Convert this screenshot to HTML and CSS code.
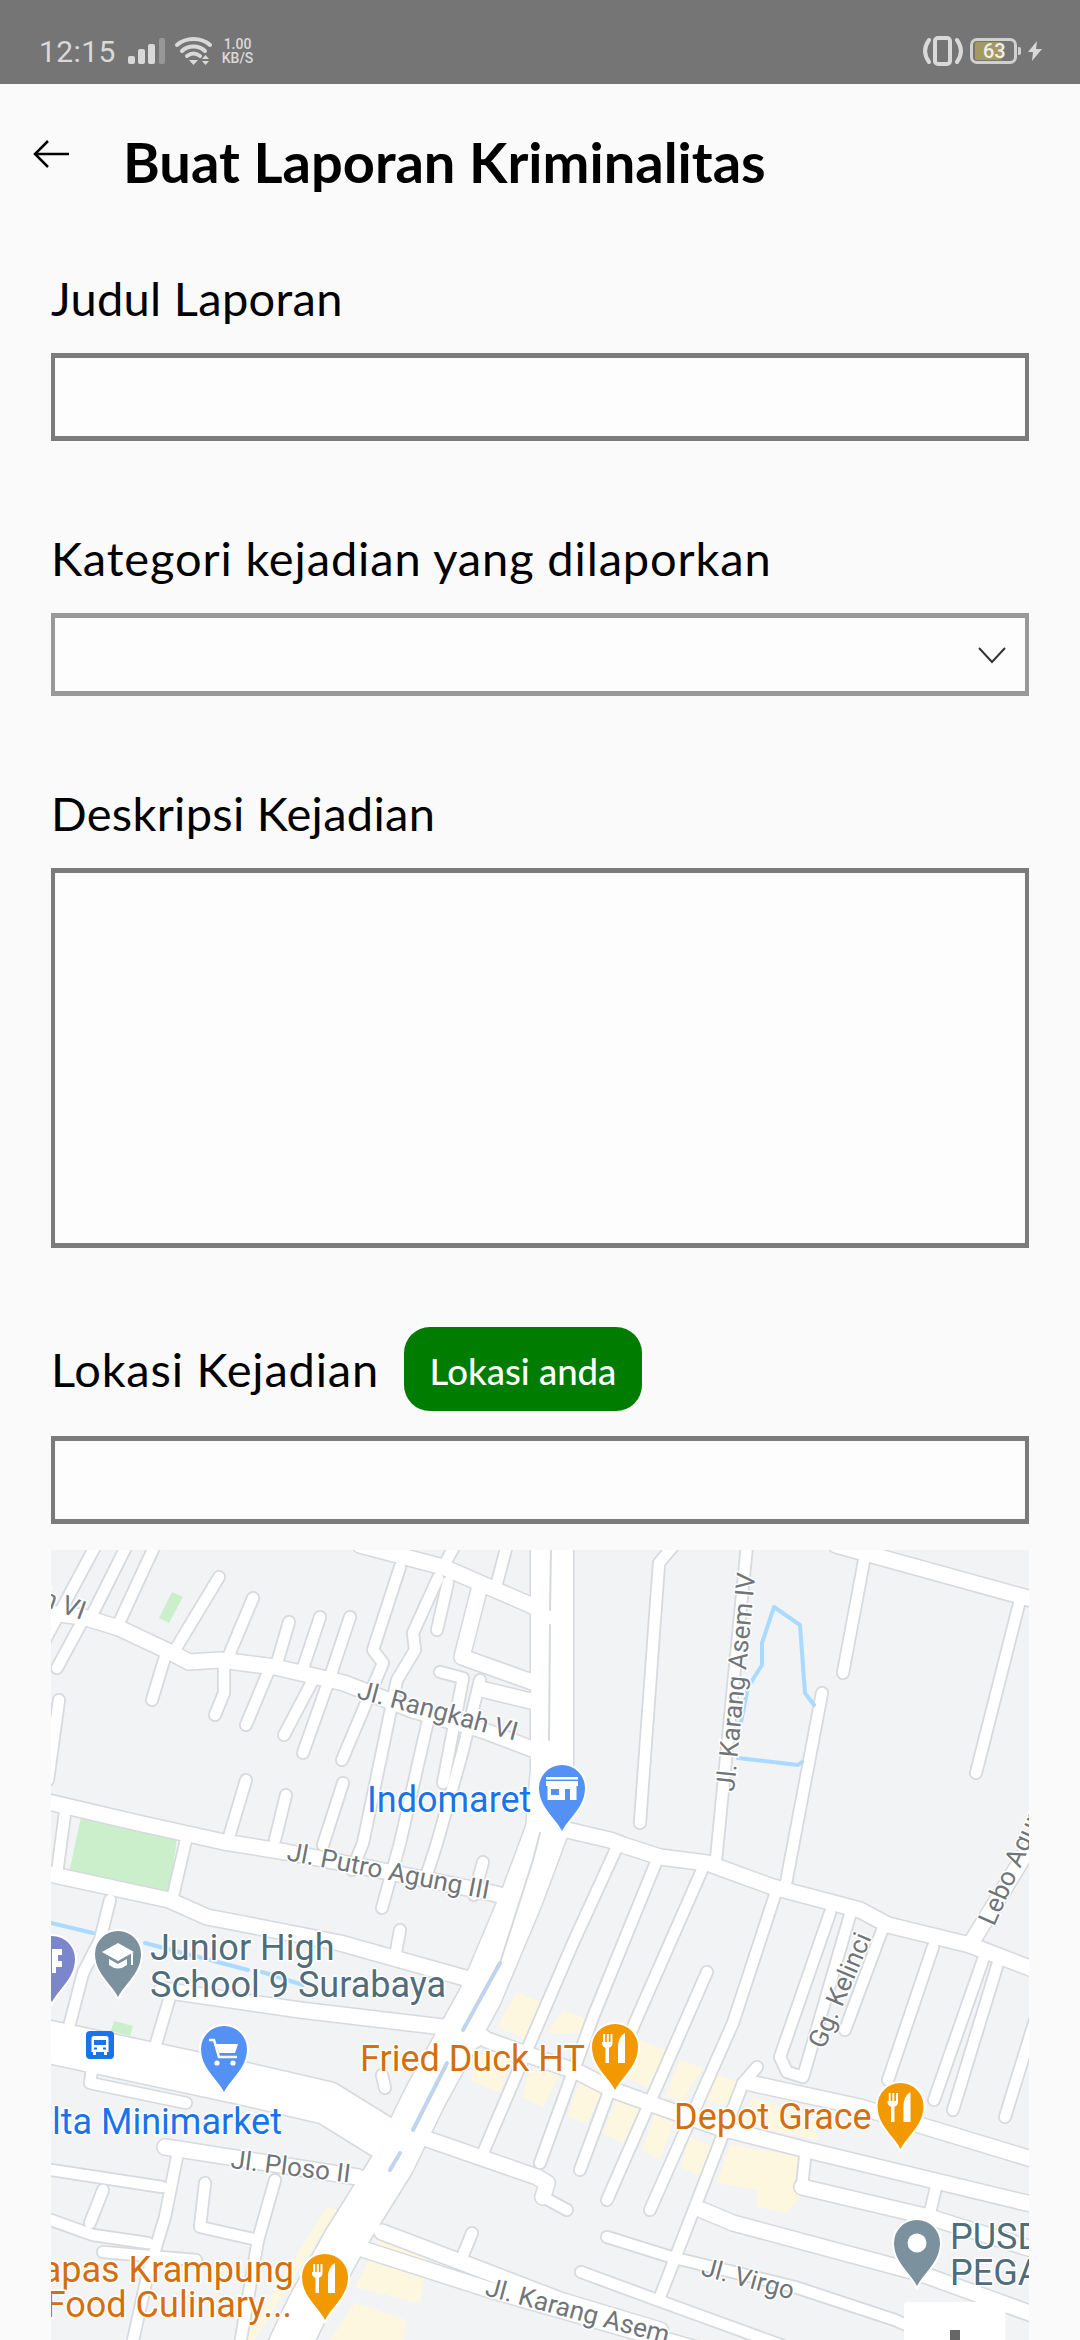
FILE: index.html
```html
<!DOCTYPE html>
<html lang="id">
    <head>
        <meta charset="UTF-8" />
        <meta name="viewport" content="width=device-width, initial-scale=1.0" />
        <title>Buat Laporan Kriminalitas</title>
        <link rel="stylesheet" href="styles.css">
    </head>
    <body>
        <div class="status-bar">
            <span class="clock">12:15</span>
            <svg class="ic-signal" width="38" height="26" viewBox="0 0 38 26">
                <rect class="ic-fill" x="0" y="18" width="7" height="8" rx="2" />
                <rect class="ic-fill" x="10" y="11" width="7" height="15" rx="2" />
                <rect class="ic-fill" x="20" y="6" width="7" height="20" rx="2" />
                <rect class="ic-dim" x="31" y="0" width="6" height="26" rx="2" />
            </svg>
            <svg class="ic-wifi" width="38" height="30" viewBox="0 0 38 30">
                <path class="ic-line" d="M2 9 C11 1 26 1 35 9" />
                <path class="ic-line" d="M7 15 C13 9 24 9 30 15" />
                <path class="ic-line" d="M12 20 C16 17 21 17 25 20" />
                <path class="ic-fill" d="M14 24 h9 l-4.500 5z" />
                <path class="ic-fill" d="M27 23 l3.500 -4 3.500 4z M27 25 h7 l-3.500 4z" />
            </svg>
            <div class="net-speed">
                <span>1.00</span>
                <span>KB/S</span>
            </div>
            <div class="status-right">
                <svg width="42" height="30" viewBox="0 0 42 30">
                    <rect class="ic-line" x="13" y="2" width="15" height="26" rx="3" />
                    <path class="ic-line" d="M7 4 C2 11 2 19 7 26" />
                    <path class="ic-line" d="M35 4 C40 11 40 19 35 26" />
                </svg>
                <div class="battery">
                    <div class="battery-level"></div>
                    <span class="battery-text">63</span>
                </div>
                <svg class="ic-bolt" width="14" height="20" viewBox="0 0 14 20">
                    <path class="ic-fill" d="M9 0 L0 11 H5 L4 20 L14 8 H8z" />
                </svg>
            </div>
        </div>

        <header class="app-bar">
            <svg class="back" width="36" height="28" viewBox="0 0 36 28">
                <path d="M15 1 L2 14 L15 27 M2 14 H36" />
            </svg>
            <h1>Buat Laporan Kriminalitas</h1>
        </header>

        <form class="report-form">
            <label class="label label-first">Judul Laporan</label>
            <input class="field field-line" type="text" />

            <label class="label label-wide">Kategori kejadian yang dilaporkan</label>
            <div class="select-wrap">
                <select class="field field-select"></select>
                <svg class="chevron" width="30" height="18" viewBox="0 0 30 18">
                    <path d="M2 2 L15 16 L28 2" />
                </svg>
            </div>

            <label class="label">Deskripsi Kejadian</label>
            <textarea class="field field-area"></textarea>

            <div class="location-row">
                <label class="label-inline">Lokasi Kejadian</label>
                <button class="btn-location" type="button">Lokasi anda</button>
            </div>
            <input class="field field-line" type="text" />

            <div class="map">
                <svg width="978" height="790" viewBox="51 1550 978 790">
                    <defs>
                        <g id="lanes">
                            <path d="M219 1577 L175 1650" />
                            <path d="M253 1598 L229 1655" />
                            <path d="M269 1670 L246 1725" />
                            <path d="M289 1622 L277 1663" />
                            <path d="M320 1617 L303 1668" />
                            <path d="M313 1680 L284 1735" />
                            <path d="M350 1617 L330 1677 L303 1753" />
                            <path d="M400 1567 L373 1650 L383 1663 L342 1760" />
                            <path d="M165 1657 L152 1700" />
                            <path d="M224 1667 L224 1693 L215 1715" />
                            <path d="M155 1545 L119 1623" />
                            <path d="M127 1545 L93 1613" />
                            <path d="M96 1545 L45 1640" />
                            <path d="M83 1620 L57 1668" />
                            <path d="M59 1700 L48 1780" />
                            <path d="M438 1578 L413 1633 L415 1650 L397 1680 L363 1843 L352 1870" />
                            <path d="M430 1712 L400 1843 L382 1908" />
                            <path d="M448 1582 L437 1630" />
                            <path d="M440 1672 L463 1678 L443 1783" />
                            <path d="M480 1680 L463 1750 L437 1843 L425 1880" />
                            <path d="M483 1862 L474 1895" />
                            <path d="M400 1930 L395 1957" />
                            <path d="M507 1545 L497 1583" />
                            <path d="M455 1545 L443 1567" />
                            <path d="M246 1780 L229 1837" />
                            <path d="M286 1795 L275 1840" />
                            <path d="M343 1783 L323 1845" />
                            <path d="M65 1813 L57 1873" />
                            <path d="M186 1840 L172 1900" />
                            <path d="M110 1900 L100 1940 L83 1973 L69 2027" />
                            <path d="M169 2000 L155 2047" />
                            <path d="M93 2063 L90 2083 L186 2103" />
                            <path d="M179 2147 L165 2217 L148 2273 L132 2345" />
                            <path d="M51 2170 L162 2187" />
                            <path d="M103 2190 L90 2223" />
                            <path d="M51 2220 L93 2235 L148 2243" />
                            <path d="M205 2183 L200 2227 L258 2240" />
                            <path d="M275 2180 L258 2240 L240 2345" />
                            <path d="M103 2252 L196 2260" />
                            <path d="M385 2088 L382 2075" />
                            <path d="M543 2197 L567 2210" />
                            <path d="M472 2233 L461 2260" />
                            <path d="M659 1563 L674 1545 M659 1563 L640 1823" />
                            <path d="M747 1545 L716 1860" />
                            <path d="M822 1693 L786 1883" />
                            <path d="M867 1545 L843 1673" />
                            <path d="M1020 1600 L976 1773" />
                            <path d="M617 1847 L573 1943 L530 2043 L483 2153" />
                            <path d="M657 1860 L593 2017 L540 2163" />
                            <path d="M702 1870 L633 2027 L580 2170" />
                            <path d="M707 1972 L607 2200" />
                            <path d="M775 1895 L733 2023 L650 2210" />
                            <path d="M757 2067 L743 2083 L660 2297" />
                            <path d="M830 1913 L780 2057 L787 2072 L803 2077 L850 1915" />
                            <path d="M884 1925 L845 2030" />
                            <path d="M933 1947 L888 2080" />
                            <path d="M984 1957 L934 2100" />
                            <path d="M998 1963 L953 2110" />
                            <path d="M1035 2020 L1005 2117" />
                            <path d="M936 2187 L929 2217" />
                            <path d="M805 2157 L802 2187" />
                            <path d="M607 2237 L671 2257 L795 2287 L895 2320 L950 2345" />
                            <path d="M581 2272 L657 2300 L781 2345" />
                        </g>
                        <g id="streets">
                            <path d="M40 1612 L83 1617 L119 1628 L172 1653 L189 1662 L220 1660 L275 1667 L344 1683 L413 1710 L482 1730 L535 1750" />
                            <path d="M360 1545 L443 1567 L535 1607" />
                            <path d="M479 1590 L462 1657 L535 1683" />
                            <path d="M485 1690 L535 1702" />
                            <path d="M40 1800 L138 1823 L224 1842 L286 1852 L379 1870 L492 1893 L530 1903" />
                            <path d="M567 1830 L610 1840 L623 1845 L660 1857 L707 1863 L773 1887 L860 1910 L888 1925 L970 1945 L1035 1970" />
                            <path d="M836 1545 L1035 1600" />
                            <path d="M970 1945 L1035 1838" />
                            <path d="M40 1872 L169 1900 L207 1917 L300 1935 L340 1943 L390 1957 L490 1985" />
                            <path d="M162 1990 L300 2010 L443 2027 L475 2040" />
                            <path d="M473 2030 L487 2040 L580 2073 L613 2090 L660 2107 L717 2127 L807 2150 L1035 2205" />
                            <path d="M750 2083 L860 2107 L1035 2160" />
                            <path d="M802 2187 L929 2217 L1035 2250" />
                            <path d="M702 2210 L733 2223 L919 2273 L1035 2315" />
                            <path d="M430 2140 L537 2177 L547 2183 L543 2197" />
                            <path d="M165 2147 L358 2177" />
                            <path d="M382 2232 L482 2270 L560 2300 L660 2330" />
                            <path d="M350 2245 L490 2290 L700 2350" />
                        </g>
                        <g id="mains">
                            <path class="wide" d="M40 2040 L241 2083 L327 2103 L382 2137" />
                            <path d="M552 1545 L552 1770 L547 1830 L522 1897 L480 1997 L425 2097 L393 2163 L345 2240 L308 2307 L290 2345" />
                        </g>
                        <path id="pin" d="M0 70 C-3 58 -24 46 -24 24 A24 24 0 1 1 24 24 C24 46 3 58 0 70Z" />
                        <g id="food">
                            <path d="M-13 11 v9 a5 5 0 0 0 3.500 4.700 V40 h3.500 V24.700 a5 5 0 0 0 3.500 -4.700 v-9 h-2 v8 h-1.700 v-8 h-2 v8 h-1.600 v-8 h-2 v8 h-1.200 v-8z" />
                            <path d="M3 40 V24 C3 17 6 12 10 10 V40z" />
                        </g>
                    </defs>

                    <polygon class="park" points="81,1817 177,1838 169,1895 69,1873" />
                    <polygon class="park" points="172,1592 183,1597 169,1623 159,1618" />
                    <polygon class="park" points="114,2021 133,2026 130,2036 111,2031" />
                    <g class="build">
                        <polygon points="517,1992 543,2003 527,2040 497,2027" />
                        <polygon points="563,2010 588,2020 580,2033 547,2033" />
                        <polygon points="640,2040 665,2050 652,2090 627,2078" />
                        <polygon points="680,2060 703,2068 683,2100 665,2097" />
                        <polygon points="717,2075 740,2083 730,2107 705,2100" />
                        <polygon points="487,2043 510,2060 500,2093 470,2080" />
                        <polygon points="530,2070 560,2073 543,2107 522,2097" />
                        <polygon points="580,2080 603,2090 587,2123 567,2117" />
                        <polygon points="617,2097 642,2107 623,2143 603,2133" />
                        <polygon points="655,2113 673,2123 660,2160 642,2150" />
                        <polygon points="690,2137 713,2147 700,2175 680,2167" />
                        <polygon points="753,2097 817,2120 817,2140 740,2123" />
                        <polygon points="730,2145 803,2157 800,2197 787,2213 757,2207 757,2190 717,2183" />
                        <polygon points="327,2207 337,2210 251,2345 240,2345" />
                        <polygon points="379,2240 427,2257 420,2303 355,2287" />
                        <polygon points="355,2303 406,2320 403,2345 327,2345" />
                    </g>

                    <use href="#lanes" class="case case-lane" />
                    <use href="#streets" class="case case-street" />
                    <use href="#mains" class="case case-main" />
                    <use href="#lanes" class="road road-lane" />
                    <use href="#streets" class="road road-street" />
                    <use href="#mains" class="road road-main" />

                    <g class="median">
                        <path d="M551 1545 L550 1610 M550 1625 L549 1740" />
                        <path d="M540 1833 L533 1860 L500 1963" />
                    </g>
                    <g class="water">
                        <path d="M741 1722 L748 1687 L762 1665 L762 1643 L774 1607 L800 1625 L805 1693 L814 1705" />
                        <path d="M738 1758 L798 1765 L802 1762" />
                        <path d="M51 1923 L93 1933" />
                        <path d="M145 1943 L248 1970 M262 1972 L303 1985" />
                    </g>
                    <g class="water-thin">
                        <path d="M500 1963 L463 2030" />
                        <path d="M447 2063 L413 2130" />
                        <path d="M400 2153 L390 2170" />
                    </g>

                    <g class="street-text">
                        <text transform="translate(82 1620) rotate(20)" text-anchor="end">Jl. Rangkah VI</text>
                        <text transform="translate(356 1698) rotate(15)">Jl. Rangkah VI</text>
                        <text transform="translate(286 1860) rotate(11)">Jl. Putro Agung III</text>
                        <text transform="translate(734 1792) rotate(-84.400)">Jl. Karang Asem IV</text>
                        <text transform="translate(824 2050) rotate(-67)">Gg. Kelinci</text>
                        <text transform="translate(994 1927) rotate(-66)">Lebo Agung</text>
                        <text transform="translate(230 2168) rotate(7)">Jl. Ploso II</text>
                        <text transform="translate(700 2275) rotate(15)">Jl. Virgo</text>
                        <text transform="translate(484 2295) rotate(15)">Jl. Karang Asem</text>
                    </g>

                    <g class="poi-text poi-blue">
                        <text x="367" y="1812">Indomaret</text>
                        <text x="282" y="2134" text-anchor="end">Delta Minimarket</text>
                    </g>
                    <g class="poi-text poi-slate">
                        <text><tspan x="150" y="1960">Junior High</tspan><tspan x="150" y="1997">School 9 Surabaya</tspan></text>
                        <text><tspan x="950" y="2249">PUSDIK</tspan><tspan x="950" y="2285">PEGAWAI</tspan></text>
                    </g>
                    <g class="poi-text poi-orange">
                        <text x="360" y="2071">Fried Duck HT</text>
                        <text x="674" y="2129">Depot Grace</text>
                        <text text-anchor="end"><tspan x="294" y="2282">Lapas Krampung</tspan><tspan x="292" y="2317">Food Culinary...</tspan></text>
                    </g>

                    <g transform="translate(562 1764)">
                        <use href="#pin" class="pin pin-blue" />
                        <rect class="ic-white" x="-16" y="13" width="32" height="2.500" />
                        <path class="ic-white" fill-rule="evenodd" d="M-16 17 h32 v5 h-1.500 v14 h-29 v-14 h-1.500z M-11 25 v6 h8 v-6z M3 25 v11 h5 v-11z" />
                    </g>
                    <g transform="translate(224 2025)">
                        <use href="#pin" class="pin pin-blue" />
                        <path class="ic-stroke" d="M-15 15 h5 l5 17 h18" />
                        <path class="ic-white" d="M-8 19 h22 l-3 9 h-16z" />
                        <circle class="ic-white" cx="-7" cy="38" r="2.600" />
                        <circle class="ic-white" cx="9" cy="38" r="2.600" />
                    </g>
                    <g transform="translate(118 1930)">
                        <use href="#pin" class="pin pin-slate" />
                        <path class="ic-white" d="M-16 22 L0 13 L16 22 L0 31z" />
                        <path class="ic-white" d="M-9 29 v6 Q0 42 9 35 v-6 L0 34z" />
                        <rect class="ic-white" x="13" y="23" width="2" height="12" />
                    </g>
                    <g transform="translate(52 1935)">
                        <use href="#pin" class="pin pin-purple" />
                        <path class="ic-white" d="M0 14 h10 v6 h-4 v6 h4 v6 h-6 v6 h-4z" />
                    </g>
                    <g transform="translate(615 2023)">
                        <use href="#pin" class="pin pin-orange" />
                        <use href="#food" class="ic-white" />
                    </g>
                    <g transform="translate(900.500 2082)">
                        <use href="#pin" class="pin pin-orange" />
                        <use href="#food" class="ic-white" />
                    </g>
                    <g transform="translate(325 2253)">
                        <use href="#pin" class="pin pin-orange" />
                        <use href="#food" class="ic-white" />
                    </g>
                    <g transform="translate(917 2219)">
                        <use href="#pin" class="pin pin-slate" />
                        <circle class="ic-white" cx="0" cy="24" r="9.500" />
                    </g>

                    <rect class="bus-bg" x="86" y="2031" width="28" height="28" rx="4" />
                    <path class="ic-white" fill-rule="evenodd" d="M94 2036 h12 a2.500 2.500 0 0 1 2.500 2.500 V2052 h-1.500 v3 h-3 v-3 h-8 v3 h-3 v-3 h-1.500 V2038.500 a2.500 2.500 0 0 1 2.500 -2.500z M94 2040 v5 h12 v-5z M94 2047.500 v2 h3 v-2z M103 2047.500 v2 h3 v-2z" />

                    <rect class="zoom-box" x="904" y="2302" width="101.500" height="60" rx="3" />
                    <rect class="zoom-plus" x="950" y="2330" width="10" height="14" />
                </svg>
            </div>
        </form>
    </body>
</html>
```

FILE: styles.css
```css
* {
    box-sizing: border-box;
}
html, body {
    margin: 0;
    padding: 0;
}
body {
    width: 1080px;
    height: 2340px;
    overflow: hidden;
    background: #fafafa;
    font-family: "Lato", "Noto Sans", sans-serif;
    color: #000;
}

/* status bar */
.status-bar {
    height: 84px;
    background: #757575;
    padding: 18px 38px 0 39px;
    display: flex;
    align-items: center;
    font-family: "Roboto", sans-serif;
    color: #d9d9d9;
}
.clock {
    font-size: 30px;
    letter-spacing: 0.4px;
}
.ic-signal {
    margin-left: 12px;
}
.ic-wifi {
    margin-left: 9px;
}
.ic-fill {
    fill: #d9d9d9;
}
.ic-dim {
    fill: #979797;
}
.ic-line {
    fill: none;
    stroke: #d9d9d9;
    stroke-width: 4;
    stroke-linecap: round;
}
.net-speed {
    margin-left: 9px;
    display: flex;
    flex-direction: column;
    font-size: 14px;
    font-weight: 500;
    line-height: 14px;
    align-items: center;
}
.status-right {
    margin-left: auto;
    display: flex;
    align-items: center;
    gap: 6px;
}
.battery {
    position: relative;
    width: 47px;
    height: 26px;
    border: 3px solid #d0d0d0;
    border-radius: 7px;
    margin-right: 5px;
}
.battery::after {
    content: "";
    position: absolute;
    right: -7px;
    top: 6px;
    width: 3px;
    height: 8px;
    background: #d0d0d0;
    border-radius: 0 2px 2px 0;
}
.battery-level {
    position: absolute;
    left: 2px;
    top: 1px;
    bottom: 1px;
    width: 27px;
    background: #a39a5e;
    border-radius: 2px;
}
.battery-text {
    position: absolute;
    left: 10px;
    top: -2px;
    font-size: 20px;
    line-height: 24px;
    font-weight: 500;
    color: #eeeeee;
}

/* header */
.app-bar {
    height: 184px;
    padding: 0 0 0 33px;
    display: flex;
    align-items: flex-start;
}
.back {
    margin-top: 56px;
}
.back path {
    fill: none;
    stroke: #000;
    stroke-width: 2.500;
}
.app-bar h1 {
    margin: 43px 0 0 54px;
    font-size: 56px;
    line-height: 70px;
    font-weight: 700;
    letter-spacing: 0;
}

/* form */
.report-form {
    padding: 0 51px;
    display: flex;
    flex-direction: column;
}
.label {
    display: block;
    height: 60px;
    margin: 87px 0 25px;
    font-size: 47px;
    line-height: 60px;
    letter-spacing: 0.3px;
}
.label-first {
    margin-top: 0;
}
.label-wide {
    letter-spacing: 0.86px;
}
.field {
    display: block;
    width: 100%;
    margin: 0;
    padding: 0;
    background: #fdfdfd;
    border: solid #7b7b7b;
    border-width: 5px 4px;
    border-radius: 0;
    outline: none;
    appearance: none;
}
.field-line {
    height: 88px;
}
.select-wrap {
    position: relative;
}
.field-select {
    height: 83px;
    border-color: #999999;
}
.chevron {
    position: absolute;
    right: 22px;
    top: 33px;
}
.chevron path {
    fill: none;
    stroke: #333333;
    stroke-width: 2;
}
.field-area {
    height: 380px;
    resize: none;
}
.location-row {
    margin: 79px 0 25px;
    height: 84px;
    display: flex;
    align-items: center;
    gap: 25px;
}
.label-inline {
    font-size: 47px;
    line-height: 60px;
    letter-spacing: 0.8px;
}
.btn-location {
    width: 238px;
    height: 84px;
    border: none;
    border-radius: 26px;
    background: #007c00;
    color: #fff;
    font-family: inherit;
    font-size: 36.500px;
    font-weight: 500;
    padding: 4px 0 0;
}

/* map */
.map {
    margin-top: 26px;
    width: 978px;
    height: 790px;
    background: #f1f3f4;
    overflow: hidden;
}
.map svg {
    display: block;
}
.park {
    fill: #cbeecb;
}
.build {
    fill: #fef7e0;
}
.case, .road, .water, .water-thin, .median {
    fill: none;
    stroke-linecap: round;
    stroke-linejoin: round;
}
.case {
    stroke: #d6d9de;
}
.road {
    stroke: #ffffff;
}
.case-lane {
    stroke-width: 14;
}
.road-lane {
    stroke-width: 10.500;
}
.case-street {
    stroke-width: 18;
}
.road-street {
    stroke-width: 15;
}
.case-main {
    stroke-width: 45;
}
.road-main {
    stroke-width: 42;
}
.case-main .wide {
    stroke-width: 23;
}
.road-main .wide {
    stroke-width: 20;
}
.median {
    stroke: #d6d9de;
    stroke-width: 2;
}
.water {
    stroke: #aadaff;
    stroke-width: 4;
}
.water-thin {
    stroke: #c0d4ee;
    stroke-width: 4;
}
.street-text text {
    font-family: "Roboto", sans-serif;
    font-size: 26px;
    fill: #70757a;
    stroke: #fff;
    stroke-width: 3px;
    paint-order: stroke;
}
.poi-text text {
    font-family: "Roboto", sans-serif;
    font-size: 36px;
    stroke: #fff;
    stroke-width: 3px;
    paint-order: stroke;
}
.poi-blue text {
    fill: #1a73e8;
}
.poi-slate text {
    fill: #4f6d7a;
}
.poi-orange text {
    fill: #d56e0c;
}
.pin {
    stroke: #fff;
    stroke-width: 2;
}
.pin-blue {
    fill: #5491f5;
}
.pin-slate {
    fill: #7b919e;
}
.pin-purple {
    fill: #7b86cc;
}
.pin-orange {
    fill: #f29900;
}
.ic-white {
    fill: #fff;
}
.ic-stroke {
    fill: none;
    stroke: #fff;
    stroke-width: 2.500;
}
.bus-bg {
    fill: #1a73e8;
}
.zoom-box {
    fill: #fff;
}
.zoom-plus {
    fill: #666666;
}
```
